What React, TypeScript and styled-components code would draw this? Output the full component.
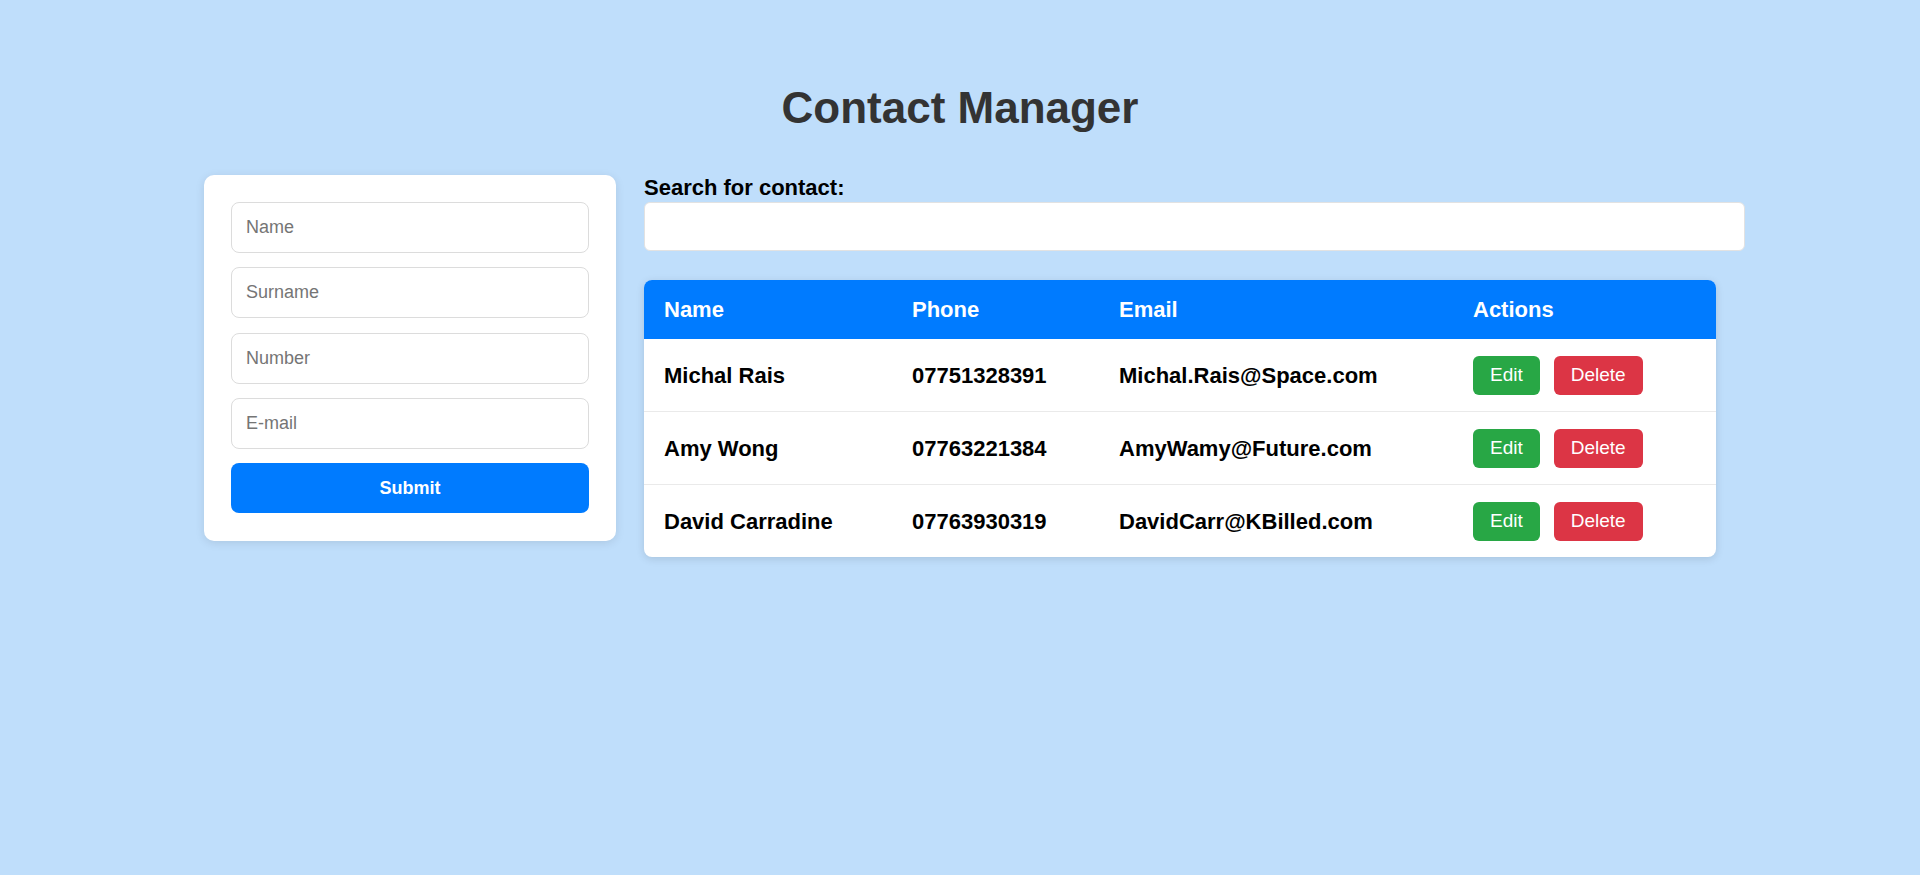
import React from "react";
import styled, { createGlobalStyle } from "styled-components";

const GlobalStyle = createGlobalStyle`
  html, body {
    margin: 0;
    padding: 0;
    background: #bfdefb;
    font-family: "Liberation Sans", Arial, sans-serif;
  }
  * { box-sizing: border-box; }
`;

const Page = styled.div`
  min-height: 875px;
  padding-top: 82px;
`;

const Title = styled.h1`
  margin: 0 0 42px;
  text-align: center;
  font-size: 44px;
  font-weight: 700;
  color: #333;
  line-height: 51px;
`;

const Main = styled.main`
  width: 1512px;
  margin: 0 auto;
  display: flex;
  gap: 28px;
  align-items: flex-start;
`;

const FormCard = styled.form`
  width: 412px;
  flex: none;
  background: #fff;
  border-radius: 10px;
  padding: 27px 27px 28px;
  box-shadow: 0 2px 10px rgba(0, 0, 0, 0.1);
  display: flex;
  flex-direction: column;
  gap: 14.3px;
`;

const Field = styled.input`
  width: 100%;
  height: 51px;
  border: 1px solid #dcdcdc;
  border-radius: 8px;
  padding: 0 14px;
  font-family: "Liberation Sans", Arial, sans-serif;
  font-size: 18px;
  color: #333;
  background: #fff;
  outline: none;
  &::placeholder { color: #757575; }
`;

const SubmitButton = styled.button`
  width: 100%;
  height: 50px;
  border: none;
  border-radius: 8px;
  background: #007bff;
  color: #fff;
  font-family: "Liberation Sans", Arial, sans-serif;
  font-size: 18px;
  font-weight: 700;
  cursor: pointer;
`;

const RightColumn = styled.section`
  flex: 1;
  min-width: 0;
  display: flex;
  flex-direction: column;
  align-items: flex-start;
`;

const SearchLabel = styled.label`
  display: block;
  font-size: 22px;
  font-weight: 700;
  color: #000;
  line-height: 26px;
  margin-bottom: 1px;
`;

const SearchInput = styled.input`
  width: 1101px;
  height: 49px;
  border: 1px solid #e2e2e2;
  border-radius: 6px;
  padding: 0 14px;
  font-family: "Liberation Sans", Arial, sans-serif;
  font-size: 18px;
  background: #fff;
  outline: none;
  margin-bottom: 29px;
`;

const TableCard = styled.div`
  width: 100%;
  background: #fff;
  border-radius: 8px;
  overflow: hidden;
  box-shadow: 0 2px 8px rgba(0, 0, 0, 0.12);
`;

const Table = styled.table`
  width: 100%;
  border-collapse: collapse;
  table-layout: fixed;
`;

const HeadCell = styled.th<{ $w: number }>`
  width: ${(p) => p.$w}px;
  background: #007bff;
  color: #fff;
  text-align: left;
  font-size: 22px;
  font-weight: 700;
  line-height: 23px;
  padding: 18px 20px;
`;

const Row = styled.tr`
  border-bottom: 1px solid #eaeaea;
  &:last-child { border-bottom: none; }
`;

const Cell = styled.td`
  font-size: 22px;
  font-weight: 700;
  color: #000;
  padding: 16.5px 20px;
  line-height: 23px;
  vertical-align: middle;
`;

const Actions = styled.div`
  display: flex;
  gap: 14px;
`;

const ActionButton = styled.button<{ $variant: "edit" | "delete" }>`
  height: 39px;
  padding: 0 17px;
  border: none;
  border-radius: 6px;
  background: ${(p) => (p.$variant === "edit" ? "#28a745" : "#dc3545")};
  color: #fff;
  font-family: "Liberation Sans", Arial, sans-serif;
  font-size: 19px;
  cursor: pointer;
`;

const contacts = [
  { name: "Michal Rais", phone: "07751328391", email: "Michal.Rais@Space.com" },
  { name: "Amy Wong", phone: "07763221384", email: "AmyWamy@Future.com" },
  { name: "David Carradine", phone: "07763930319", email: "DavidCarr@KBilled.com" },
];

export default function App() {
  return (
    <>
      <GlobalStyle />
      <Page>
        <Title>Contact Manager</Title>
        <Main>
          <FormCard onSubmit={(e) => e.preventDefault()}>
            <Field placeholder="Name" />
            <Field placeholder="Surname" />
            <Field placeholder="Number" />
            <Field placeholder="E-mail" />
            <SubmitButton type="submit">Submit</SubmitButton>
          </FormCard>
          <RightColumn>
            <SearchLabel htmlFor="search">Search for contact:</SearchLabel>
            <SearchInput id="search" />
            <TableCard>
              <Table>
                <thead>
                  <tr>
                    <HeadCell $w={248}>Name</HeadCell>
                    <HeadCell $w={207}>Phone</HeadCell>
                    <HeadCell $w={354}>Email</HeadCell>
                    <HeadCell $w={263}>Actions</HeadCell>
                  </tr>
                </thead>
                <tbody>
                  {contacts.map((c) => (
                    <Row key={c.phone}>
                      <Cell>{c.name}</Cell>
                      <Cell>{c.phone}</Cell>
                      <Cell>{c.email}</Cell>
                      <Cell>
                        <Actions>
                          <ActionButton $variant="edit">Edit</ActionButton>
                          <ActionButton $variant="delete">Delete</ActionButton>
                        </Actions>
                      </Cell>
                    </Row>
                  ))}
                </tbody>
              </Table>
            </TableCard>
          </RightColumn>
        </Main>
      </Page>
    </>
  );
}
